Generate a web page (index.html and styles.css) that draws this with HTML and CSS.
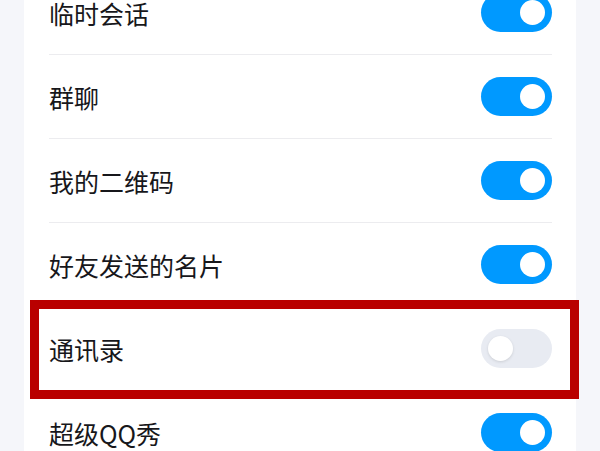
FILE: index.html
```html
<!DOCTYPE html>
<html lang="zh-CN">
<head>
<meta charset="utf-8">
<title>设置</title>
<link rel="stylesheet" href="styles.css">
</head>
<body>
<div class="page">
  <ul class="card">
    <li class="row"><span class="label">临时会话</span><span class="switch on"><span class="knob"></span></span></li>
    <li class="row"><span class="label">群聊</span><span class="switch on"><span class="knob"></span></span></li>
    <li class="row"><span class="label">我的二维码</span><span class="switch on"><span class="knob"></span></span></li>
    <li class="row"><span class="label">好友发送的名片</span><span class="switch on"><span class="knob"></span></span></li>
    <li class="row"><span class="label">通讯录</span><span class="switch off"><span class="knob"></span></span></li>
    <li class="row"><span class="label">超级QQ秀</span><span class="switch on"><span class="knob"></span></span></li>
  </ul>
  <div class="highlight"></div>
</div>
</body>
</html>
```
FILE: styles.css
```css
html, body {
  margin: 0;
  padding: 0;
  background: #f5f6fa;
  height: 100%;
  overflow: hidden;
}
.page {
  position: relative;
  width: 600px;
  height: 451px;
  overflow: hidden;
  font-family: "Noto Sans CJK SC", "Noto Sans", sans-serif;
}
.card {
  list-style: none;
  margin: -29px 0 0 24px;
  padding: 0 24px 0 25px;
  width: 552px;
  box-sizing: border-box;
  background: #ffffff;
}
.row {
  display: flex;
  align-items: center;
  justify-content: space-between;
  height: 84px;
  box-sizing: border-box;
  border-bottom: 1px solid #ececef;
}
.label {
  font-size: 25px;
  color: #17171b;
  line-height: 1;
  padding-top: 2px;
}
.switch {
  display: flex;
  align-items: center;
  width: 71px;
  height: 39px;
  border-radius: 20px;
  padding: 0 7px;
  box-sizing: border-box;
}
.switch.on {
  background: #0099ff;
  justify-content: flex-end;
}
.switch.off {
  background: #e8ebf2;
  justify-content: flex-start;
}
.knob {
  width: 25px;
  height: 25px;
  border-radius: 50%;
  background: #ffffff;
}
.switch.off .knob {
  box-shadow: 0 1px 3px rgba(0, 0, 0, 0.12);
}
.highlight {
  position: absolute;
  left: 30px;
  top: 300px;
  width: 549px;
  height: 99px;
  box-sizing: border-box;
  border: 9px solid #b90000;
}
```
